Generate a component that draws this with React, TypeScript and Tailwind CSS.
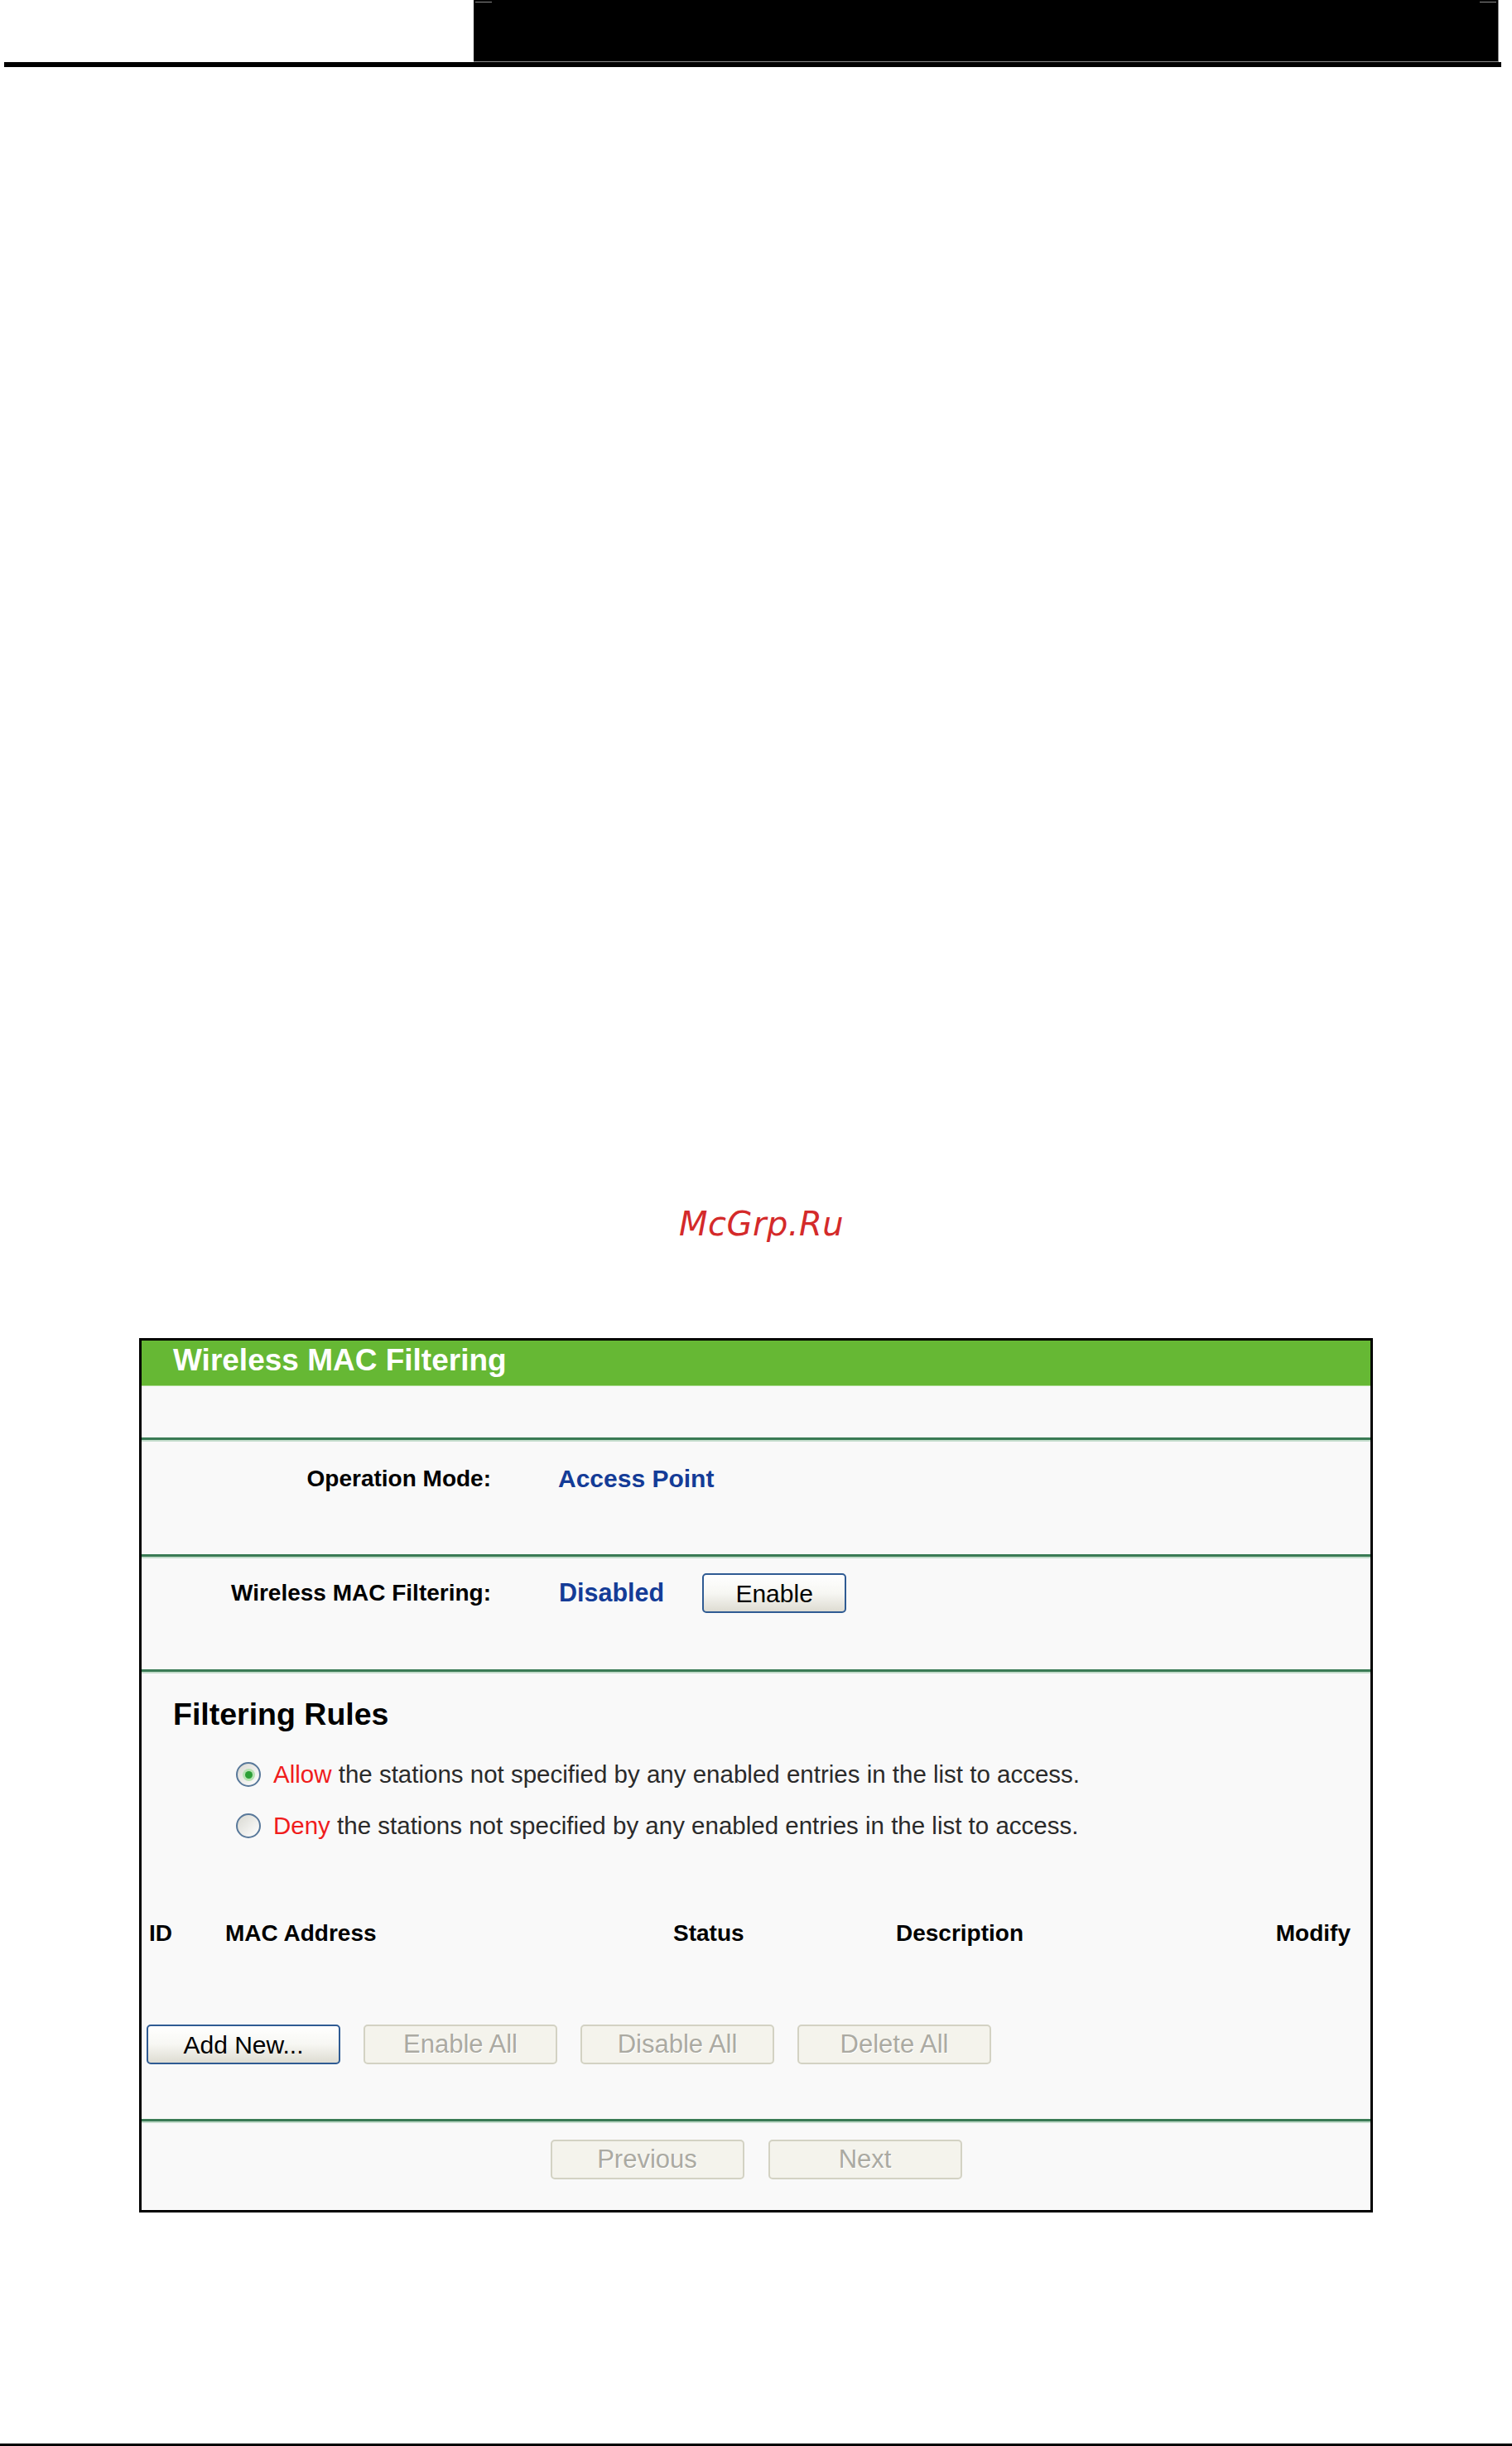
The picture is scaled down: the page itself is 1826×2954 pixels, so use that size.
import type { ReactNode } from 'react';

const SANS = "font-['Liberation_Sans',Arial,sans-serif]";

function Separator() {
  return (
    <div className="flex flex-col">
      <div className="h-[3px] bg-[#3a7b55]" />
      <div className="h-[2px] bg-[#c3dccb]" />
    </div>
  );
}

function Button({ children, disabled, width }: { children: ReactNode; disabled?: boolean; width: string }) {
  if (disabled) {
    return (
      <button
        type="button"
        disabled
        className={`${width} flex h-[48px] items-center justify-center rounded-[5px] border-2 border-[#d3d2c3] bg-[#f4f3ec] text-[31px] text-[#abaaa2] [text-shadow:1px_1px_0_#ffffff]`}
      >
        {children}
      </button>
    );
  }
  return (
    <button
      type="button"
      className={`${width} flex h-[48px] items-center justify-center rounded-[5px] border-2 border-[#2f5b93] bg-linear-to-b from-white via-[#f7f7f3] to-[#dedcd2] text-[30px] text-black`}
    >
      {children}
    </button>
  );
}

function Radio({ checked }: { checked?: boolean }) {
  return (
    <span className="flex h-[30px] w-[30px] shrink-0 items-center justify-center rounded-full border-2 border-[#58789a] bg-linear-to-br from-[#d9d9d2] to-white">
      {checked && <span className="h-[9px] w-[9px] rounded-full bg-[#2c9f36] shadow-[0_0_0_3px_#b7e2b3]" />}
    </span>
  );
}

function RuleOption({ checked, word }: { checked?: boolean; word: string }) {
  return (
    <div className="flex h-[40px] items-center pl-[114px]">
      <Radio checked={checked} />
      <span className="ml-[15px] text-[29.5px] text-[#2a2a2a]">
        <span className="text-[#f01c1c]">{word}</span> the stations not specified by any enabled entries in the list to access.
      </span>
    </div>
  );
}

export default function App() {
  return (
    <div className={`flex w-full flex-col bg-white ${SANS}`}>
      {/* page header */}
      <div className="ml-[5px] flex w-[1808px] flex-col">
        <div className="relative ml-[567px] h-[75px] w-[1238px] border-r border-b border-[#8a8a8a] bg-black">
          <span className="absolute top-[2px] left-[2px] h-[1px] w-[20px] bg-[#8a8a8a]" />
          <span className="absolute top-[2px] right-[2px] h-[1px] w-[20px] bg-[#8a8a8a]" />
        </div>
        <div className="h-[6px] bg-black" />
      </div>

      <div className="mt-[1377px] flex pl-[820px]">
        <span className="font-['DejaVu_Sans',sans-serif] text-[40px] leading-none tracking-[0.5px] text-[#d42a2a] italic">
          McGrp.Ru
        </span>
      </div>

      {/* wireless mac filtering panel */}
      <div className="mt-[118px] ml-[168px] flex w-[1490px] flex-col border-[3px] border-black bg-[#f9f9f9]">
        <div className="flex h-[54px] items-center bg-[#66b834] pb-[6px] pl-[38px]">
          <span className="text-[37px] font-bold text-white">Wireless MAC Filtering</span>
        </div>
        <div className="h-[1px] bg-[#a6d888]" />
        <div className="h-[62px]" />
        <Separator />

        <div className="flex h-[136px] items-start pt-[27px]">
          <span className="w-[422px] text-right text-[28px] leading-[36px] font-bold text-black">Operation Mode:</span>
          <span className="ml-[81px] text-[30px] leading-[36px] font-bold text-[#143c97]">Access Point</span>
        </div>
        <Separator />

        <div className="flex h-[134px] items-start pt-[18px]">
          <div className="flex h-[48px] items-center">
            <span className="w-[422px] text-right text-[28px] font-bold text-black">Wireless MAC Filtering:</span>
            <span className="ml-[82px] text-[30.5px] font-bold text-[#143c97]">Disabled</span>
            <div className="ml-[46px]">
              <Button width="w-[174px]">Enable</Button>
            </div>
          </div>
        </div>
        <Separator />

        <div className="flex h-[538px] flex-col pt-[27px]">
          <div className="flex h-[44px] items-center pl-[38px]">
            <span className="text-[37.5px] font-bold text-black">Filtering Rules</span>
          </div>
          <div className="mt-[31px] flex flex-col gap-[22px]">
            <RuleOption checked word="Allow" />
            <RuleOption word="Deny" />
          </div>

          <div className="mt-[92px] flex h-[36px] items-center pr-[24px] pl-[9px] text-[28px] font-bold text-black">
            <span className="w-[92px]">ID</span>
            <span className="w-[541px]">MAC Address</span>
            <span className="w-[269px]">Status</span>
            <span className="flex-1">Description</span>
            <span>Modify</span>
          </div>

          <div className="mt-[92px] flex gap-[28px] pl-[6px]">
            <Button width="w-[234px]">Add New...</Button>
            <Button width="w-[234px]" disabled>Enable All</Button>
            <Button width="w-[234px]" disabled>Disable All</Button>
            <Button width="w-[234px]" disabled>Delete All</Button>
          </div>
        </div>
        <Separator />

        <div className="flex h-[105px] justify-center gap-[29px] pt-[20px]">
          <Button width="w-[234px]" disabled>Previous</Button>
          <Button width="w-[234px]" disabled>Next</Button>
        </div>
      </div>

      <div className="mt-[279px] h-[3px] bg-black" />
    </div>
  );
}
